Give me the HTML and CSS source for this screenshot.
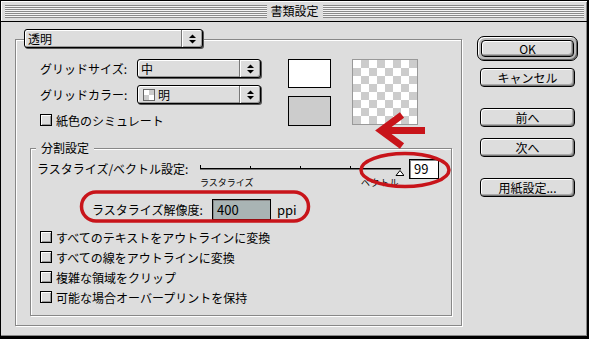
FILE: index.html
```html
<!DOCTYPE html>
<html lang="ja">
<head>
    <meta charset="UTF-8">
    <title>書類設定</title>
    <link rel="stylesheet" href="styles.css">
</head>
<body>
    <div class="window">
        <!-- Title bar -->
        <div class="titlebar">
            <span class="stripes"></span>
            <span class="title">書類設定</span>
            <span class="stripes"></span>
        </div>

        <div class="content">
            <!-- Transparency group -->
            <div class="group outer">
                <div class="popup mode-popup">
                    <span class="popup-text">透明</span>
                    <span class="popup-arrows"><svg width="7" height="10" viewBox="0 0 7 10"><polygon points="0,4 3.5,0.5 7,4" /><polygon points="0,6 7,6 3.5,9.5" /></svg></span>
                </div>

                <div class="top">
                    <div class="fields">
                        <div class="field">
                            <span class="label">グリッドサイズ:</span>
                            <div class="popup grid-popup">
                                <span class="popup-text">中</span>
                                <span class="popup-arrows"><svg width="7" height="10" viewBox="0 0 7 10"><polygon points="0,4 3.5,0.5 7,4" /><polygon points="0,6 7,6 3.5,9.5" /></svg></span>
                            </div>
                        </div>
                        <div class="field">
                            <span class="label">グリッドカラー:</span>
                            <div class="popup grid-popup">
                                <span class="popup-text"><span class="mini-checker"></span>明</span>
                                <span class="popup-arrows"><svg width="7" height="10" viewBox="0 0 7 10"><polygon points="0,4 3.5,0.5 7,4" /><polygon points="0,6 7,6 3.5,9.5" /></svg></span>
                            </div>
                        </div>
                        <div class="check paper-check"><span class="box"></span>紙色のシミュレート</div>
                    </div>
                    <div class="swatches">
                        <div class="swatch white"></div>
                        <div class="swatch grey"></div>
                    </div>
                    <div class="checker"></div>
                </div>

                <!-- Flattener group -->
                <div class="group inner">
                    <div class="legend">分割設定</div>

                    <div class="slider-row">
                        <span class="slider-label">ラスタライズ/ベクトル設定:</span>
                        <div class="slider">
                            <svg width="206" height="16" viewBox="0 0 206 16">
                                <rect x="2" y="7" width="201" height="1" fill="#000" />
                                <rect x="2" y="8" width="201" height="1" fill="#777" />
                                <rect x="2" y="4" width="1" height="3" fill="#000" />
                                <rect x="52" y="5" width="1" height="2" fill="#000" />
                                <rect x="102" y="5" width="1" height="2" fill="#000" />
                                <rect x="152" y="5" width="1" height="2" fill="#000" />
                                <polygon points="198,14.5 202,9.5 206,14.5" fill="#fff" stroke="#000" stroke-width="1" />
                            </svg>
                            <div class="slider-ends">
                                <span>ラスタライズ</span>
                                <span class="vector">ベクトル</span>
                            </div>
                        </div>
                        <div class="textfield value">99</div>
                    </div>

                    <div class="res-row">
                        <span class="res-label">ラスタライズ解像度:</span>
                        <div class="textfield res">400</div>
                        <span class="unit">ppi</span>
                    </div>

                    <div class="checks">
                        <div class="check"><span class="box"></span>すべてのテキストをアウトラインに変換</div>
                        <div class="check"><span class="box"></span>すべての線をアウトラインに変換</div>
                        <div class="check"><span class="box"></span>複雑な領域をクリップ</div>
                        <div class="check"><span class="box"></span>可能な場合オーバープリントを保持</div>
                    </div>
                </div>
            </div>

            <!-- Dialog buttons -->
            <div class="buttons">
                <div class="default-ring"><div class="button ok">OK</div></div>
                <div class="button cancel">キャンセル</div>
                <div class="button prev">前へ</div>
                <div class="button next">次へ</div>
                <div class="button setup">用紙設定...</div>
            </div>
        </div>

        <!-- red annotation marks -->
        <svg class="marks" width="589" height="339" viewBox="0 0 589 339">
            <g fill="none" stroke="#c8141a" stroke-width="3.5">
                <ellipse cx="405" cy="170" rx="44" ry="16.5" />
                <rect x="81.5" y="192" width="227" height="29" rx="14.5" />
                <polyline points="402,115 381,130.5 402,146" stroke-width="7" stroke-linejoin="miter" stroke-miterlimit="10" />
                <line x1="386" y1="130.5" x2="425" y2="130.5" stroke-width="7" />
            </g>
        </svg>
    </div>
</body>
</html>
```

FILE: styles.css
```css
body {
    margin: 0;
    padding: 0;
    background-color: #dddddd;
    font-family: "Noto Sans CJK JP", "Noto Sans", sans-serif;
    font-size: 12px;
    color: #000;
}

.window {
    position: relative;
    width: 589px;
    height: 339px;
    box-sizing: border-box;
    border: 1px solid #000;
    border-right-width: 2px;
    border-bottom-width: 3px;
    background-color: #dddddd;
    box-shadow: inset -1px -1px 0 #888;
}

/* title bar */

.titlebar {
    display: flex;
    align-items: center;
    height: 20px;
    padding: 0 3px 0 4px;
    border-bottom: 1px solid #000;
    box-shadow: inset 1px 1px 0 #fff;
}

.stripes {
    flex: 1;
    height: 13px;
    margin-top: 1px;
    background: repeating-linear-gradient(to bottom, #8a8a8a 0 1px, #f4f4f4 1px 2px);
}

.title {
    padding: 0 4px;
    line-height: 20px;
}

.content {
    display: flex;
    align-items: flex-start;
    padding-left: 14px;
}

/* etched group boxes */

.group {
    box-sizing: border-box;
    border: 1px solid #888;
    box-shadow: inset 1px 1px 0 #fff, 1px 1px 0 #fff;
}

.outer {
    width: 447px;
    height: 287px;
    margin-top: 17px;
}

.inner {
    width: 422px;
    height: 168px;
    margin: 21px 0 0 14px;
}

/* popup menus */

.popup {
    display: flex;
    box-sizing: border-box;
    height: 19px;
    border: 1px solid #000;
    border-radius: 3px;
    background-color: #dddddd;
    box-shadow: 1px 1px 0 #555, inset 1px 1px 0 #fff, inset -1px -1px 0 #999;
}

.popup-text {
    flex: 1;
    display: flex;
    align-items: center;
    padding-left: 3px;
    line-height: 17px;
}

.popup-arrows {
    display: flex;
    align-items: center;
    justify-content: center;
    width: 20px;
    border-left: 1px solid #777;
    box-shadow: inset 1px 0 0 #fff;
}

.mode-popup {
    width: 179px;
    margin: -11px 0 0 8px;
}

.grid-popup {
    width: 124px;
}

.mini-checker {
    display: inline-block;
    width: 10px;
    height: 10px;
    margin: 0 3px 0 2px;
    border: 1px solid #666;
    background-color: #fff;
    background-image: conic-gradient(#ccc 25%, transparent 0 50%, #ccc 0 75%, transparent 0);
    background-size: 10px 10px;
}

/* top section */

.top {
    display: flex;
    align-items: flex-start;
    margin: 11px 0 0 24px;
}

.fields {
    display: flex;
    flex-direction: column;
    gap: 7px;
}

.field {
    display: flex;
    align-items: center;
}

.label {
    width: 97px;
    line-height: 19px;
}

.check.paper-check {
    margin-top: 2px;
    height: 14px;
}

.swatches {
    display: flex;
    flex-direction: column;
    gap: 8px;
    margin-left: 27px;
}

.swatch {
    box-sizing: border-box;
    width: 43px;
    height: 29px;
    border: 1px solid #000;
}

.swatch.white {
    background-color: #fff;
}

.swatch.grey {
    height: 30px;
    background-color: #cccccc;
}

.checker {
    box-sizing: border-box;
    width: 66px;
    height: 66px;
    margin-left: 21px;
    border: 1px solid #999;
    background-color: #fff;
    background-image: conic-gradient(#ccc 25%, transparent 0 50%, #ccc 0 75%, transparent 0);
    background-size: 16px 16px;
}

/* flattener section */

.legend {
    width: fit-content;
    margin: -8px 0 0 5px;
    padding: 0 5px;
    line-height: 14px;
    background-color: #dddddd;
}

.slider-row {
    display: flex;
    align-items: flex-start;
    margin: 4px 0 0 6px;
}

.slider-label {
    width: 161px;
    margin-top: 3px;
    line-height: 14px;
}

.slider {
    width: 206px;
    margin-top: 2px;
}

.slider svg {
    display: block;
}

.slider-ends {
    display: flex;
    justify-content: space-between;
    padding: 0 5px 0 2px;
    font-size: 9px;
    line-height: 12px;
}

.slider-ends .vector {
    letter-spacing: 0.5px;
}

.textfield {
    box-sizing: border-box;
    border: 1px solid #000;
    box-shadow: inset 1px 1px 0 #888;
    font-size: 13px;
    padding-left: 4px;
}

.value {
    width: 30px;
    height: 20px;
    margin-left: 5px;
    line-height: 18px;
    background-color: #fff;
}

.res-row {
    display: flex;
    align-items: center;
    margin: 10px 0 0 61px;
}

.res-label {
    width: 120px;
}

.res {
    width: 59px;
    height: 21px;
    line-height: 19px;
    background-color: #a9b4b4;
}

.unit {
    margin-left: 6px;
    font-size: 13px;
}

.checks {
    margin: 7px 0 0 9px;
}

.check {
    display: flex;
    align-items: center;
    height: 20px;
}

.box {
    box-sizing: border-box;
    width: 12px;
    height: 12px;
    margin-right: 4px;
    border: 1px solid #000;
    background-color: #dddddd;
    box-shadow: inset 1px 1px 0 #fff, inset -1px -1px 0 #999;
}

/* buttons */

.buttons {
    display: flex;
    flex-direction: column;
    margin: 14px 0 0 15px;
}

.button {
    display: flex;
    align-items: center;
    justify-content: center;
    box-sizing: border-box;
    width: 95px;
    height: 19px;
    margin-left: 3px;
    border: 1px solid #000;
    border-radius: 4px;
    background-color: #dddddd;
    box-shadow: inset 1px 1px 0 #fff, inset -1px -1px 0 #777, inset -2px -2px 0 #aaa;
}

.default-ring {
    box-sizing: border-box;
    width: 101px;
    height: 25px;
    padding: 3px;
    border: 1px solid #000;
    border-radius: 7px;
    background-color: #bbbbbb;
    box-shadow: inset 1px 1px 0 #fff, inset -1px -1px 0 #666;
}

.button.ok {
    width: 93px;
    height: 17px;
    margin-left: 0;
}

.cancel {
    margin-top: 7px;
}

.prev {
    margin-top: 21px;
}

.next {
    margin-top: 11px;
}

.setup {
    margin-top: 21px;
}

/* red annotations drawn over the dialog */

.marks {
    position: absolute;
    left: -1px;
    top: -1px;
    pointer-events: none;
}
```
